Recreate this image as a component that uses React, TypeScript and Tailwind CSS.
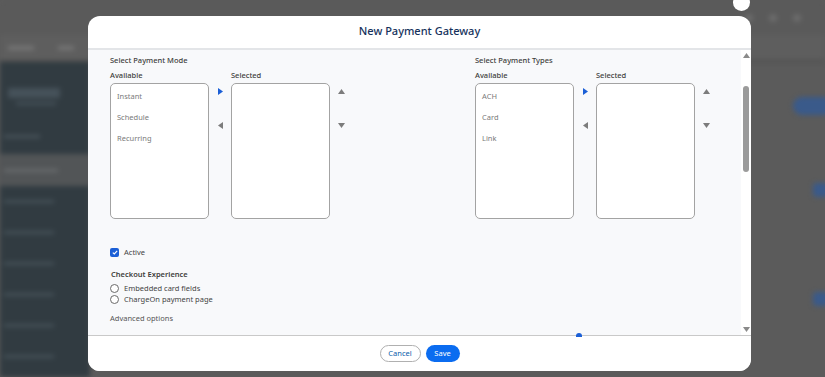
import React from "react";

const font = { fontFamily: '"Noto Sans", "Open Sans", Arial, sans-serif' };

function Tri({ dir, color }: { dir: "r" | "l" | "u" | "d"; color: string }) {
  const pts = {
    r: "0,0 5,3.5 0,7",
    l: "5,0 0,3.5 5,7",
    u: "0,5 3.5,0 7,5",
    d: "0,0 7,0 3.5,5",
  }[dir];
  const vert = dir === "u" || dir === "d";
  return (
    <svg width={vert ? 7 : 5} height={vert ? 5 : 7} viewBox={vert ? "0 0 7 5" : "0 0 5 7"}>
      <polygon points={pts} fill={color} />
    </svg>
  );
}

function DualList({ title, items }: { title: string; items: string[] }) {
  return (
    <div className="flex flex-col">
      <div className="text-[7.5px] font-medium leading-[10px] text-[#3e3e3c]">{title}</div>
      <div className="mt-[5px] flex">
        <div className="flex flex-col">
          <div className="text-[7.5px] font-medium leading-[10px] text-[#3e3e3c]">Available</div>
          <div className="mt-[3px] flex h-[136px] w-[99px] flex-col gap-[11px] rounded-[5px] border border-[#a3a3a3] bg-white px-[6px] pt-[7px]">
            {items.map((i) => (
              <div key={i} className="text-[7.5px] leading-[10px] text-[#7a7a7a]">
                {i}
              </div>
            ))}
          </div>
        </div>
        <div className="flex w-[22px] flex-col items-center pt-[18px]">
          <Tri dir="r" color="#1b5fd6" />
          <div className="h-[27px]" />
          <Tri dir="l" color="#7c7c7c" />
        </div>
        <div className="flex flex-col">
          <div className="text-[7.5px] font-medium leading-[10px] text-[#3e3e3c]">Selected</div>
          <div className="mt-[3px] h-[136px] w-[99px] rounded-[5px] border border-[#a3a3a3] bg-white" />
        </div>
        <div className="flex w-[22px] flex-col items-center pt-[19px]">
          <Tri dir="u" color="#7c7c7c" />
          <div className="h-[29px]" />
          <Tri dir="d" color="#7c7c7c" />
        </div>
      </div>
    </div>
  );
}

function Radio({ label }: { label: string }) {
  return (
    <div className="flex items-center gap-[5px]">
      <div className="h-[9px] w-[9px] rounded-full border border-[#6b6b6b] bg-white" />
      <span className="text-[7.5px] leading-[11px] text-[#444]">{label}</span>
    </div>
  );
}

export default function App() {
  return (
    <div className="relative h-[377px] w-[825px] overflow-hidden bg-[#5b5b5b]" style={font}>
      {/* Blurred app behind the overlay */}
      <div className="flex h-full flex-col blur-[2.5px]">
        <div className="flex h-[35px] items-center justify-end gap-4 bg-[#5a5a5a] px-6">
          <div className="h-[8px] w-[8px] rounded-full bg-[#6c6c6c]" />
          <div className="h-[8px] w-[8px] rounded-full bg-[#6c6c6c]" />
          <div className="h-[8px] w-[8px] rounded-full bg-[#6c6c6c]" />
        </div>
        <div className="flex h-[27px] items-center gap-6 border-b-2 border-[#4e4e4e] bg-[#5e5e5e] pl-2">
          <div className="h-[4px] w-[26px] bg-[#777]" />
          <div className="h-[4px] w-[16px] bg-[#777]" />
        </div>
        <div className="flex flex-1">
          <div className="flex w-[90px] flex-col bg-[#313b41]">
            <div className="ml-2 mt-[26px] h-[10px] w-[52px] bg-[#46525a]" />
            <div className="ml-4 mt-[4px] h-[3px] w-[40px] bg-[#46525a]" />
            <div className="ml-1 mt-[30px] h-[3px] w-[36px] bg-[#4a555c]" />
            <div className="mt-[16px] flex h-[32px] items-center bg-[#525557] pl-1">
              <div className="h-[3px] w-[54px] bg-[#6a6d6f]" />
            </div>
            {[0, 1, 2, 3, 4, 5].map((i) => (
              <div key={i} className="flex h-[31px] items-center pl-1">
                <div className="h-[3px] w-[50px] bg-[#47535a]" />
              </div>
            ))}
          </div>
          <div className="relative flex-1">
            <div className="absolute right-[-8px] top-[35px] h-[18px] w-[40px] rounded-full bg-[#3a5a8a]" />
            <div className="absolute right-[-4px] top-[121px] h-[14px] w-[16px] rounded bg-[#3a5a8a]" />
            <div className="absolute right-[-4px] top-[230px] h-[14px] w-[16px] rounded bg-[#3a5a8a]" />
          </div>
        </div>
      </div>

      {/* Close button */}
      <div className="absolute left-[733px] top-[-6px] h-[17px] w-[17px] rounded-full bg-white" />

      {/* Modal */}
      <div className="absolute left-[88px] top-[16px] flex h-[355px] w-[663px] flex-col overflow-hidden rounded-[12px] bg-white">
        <div className="flex h-[34px] shrink-0 items-center justify-center border-b-2 border-[#e3e5e8] pb-[1px]">
          <span className="text-[11px] font-medium text-[#16325c]">New Payment Gateway</span>
        </div>
        <div className="relative flex flex-1 bg-[#f8f9fb]">
          <div className="flex flex-1 flex-col pl-[22px] pt-[5px]">
            <div className="flex gap-[123px]">
              <DualList title="Select Payment Mode" items={["Instant", "Schedule", "Recurring"]} />
              <DualList title="Select Payment Types" items={["ACH", "Card", "Link"]} />
            </div>
            <div className="mt-[28px] flex items-center gap-[5px]">
              <div className="flex h-[9px] w-[9px] items-center justify-center rounded-[2px] bg-[#1b5fd6]">
                <svg width="6" height="5" viewBox="0 0 6 5">
                  <polyline points="0.8,2.6 2.3,4 5.2,0.9" fill="none" stroke="white" strokeWidth="1.1" />
                </svg>
              </div>
              <span className="text-[7.5px] leading-[10px] text-[#444]">Active</span>
            </div>
            <div className="ml-[1px] mt-[12px] text-[7.5px] font-semibold leading-[10px] text-[#3e3e3c]">
              Checkout Experience
            </div>
            <div className="mt-[4px] flex flex-col">
              <Radio label="Embedded card fields" />
              <Radio label="ChargeOn payment page" />
            </div>
            <div className="mt-[8px] text-[7.5px] leading-[10px] text-[#555]">Advanced options</div>
          </div>
          {/* Scrollbar */}
          <div className="flex w-[10px] flex-col items-center bg-white pt-[3px]">
            <Tri dir="u" color="#8a8a8a" />
            <div className="mt-[28px] h-[86px] w-[6px] rounded-full bg-[#9b9b9b]" />
            <div className="flex-1" />
            <div className="pb-[3px]">
              <Tri dir="d" color="#8a8a8a" />
            </div>
          </div>
          <div className="absolute bottom-[-2px] left-[488px] h-[4px] w-[6px] rounded-t-full bg-[#1b5fd6]" />
        </div>
        <div className="flex h-[36px] shrink-0 items-center justify-center gap-[5px] border-t border-[#c9c9c9] bg-white">
          <button className="h-[17px] w-[41px] rounded-full border border-[#b0b0b0] bg-white text-[7.5px] text-[#0b5cab]">
            Cancel
          </button>
          <button className="h-[17px] w-[34px] rounded-full bg-[#0b6cf0] text-[7.5px] text-white">Save</button>
        </div>
      </div>
    </div>
  );
}
